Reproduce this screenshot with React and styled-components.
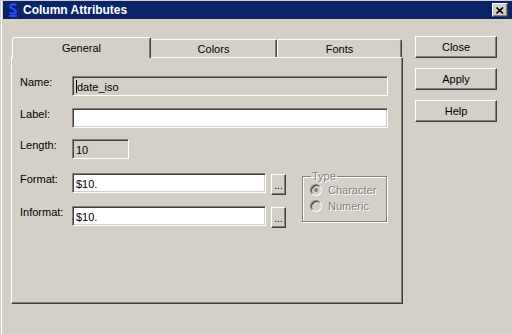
import React from "react";
import styled, { createGlobalStyle } from "styled-components";

const GlobalStyle = createGlobalStyle`
  html, body {
    margin: 0;
    padding: 0;
    background: #d4d0c8;
  }
  body {
    font-family: "Liberation Sans", Arial, sans-serif;
    font-size: 11px;
    color: #000;
  }
`;

const Window = styled.div`
  width: 512px;
  height: 334px;
  box-sizing: border-box;
  background: #d4d0c8;
  border-top: 1px solid #d4d0c8;
  padding-left: 3px;
  box-shadow: inset 1px 0 #d4d0c8, inset 2px 0 #fff;
  overflow: hidden;
`;

const TitleBar = styled.div`
  height: 18px;
  background: #0a246a;
  display: flex;
  align-items: center;
  padding: 0 4px 0 5px;
  color: #fff;
`;

const TitleText = styled.span`
  font-weight: bold;
  font-size: 12px;
  margin-left: 5px;
  flex: 1;
`;

const TitleClose = styled.div`
  width: 16px;
  height: 14px;
  box-sizing: border-box;
  background: #d4d0c8;
  border-top: 1px solid #fff;
  border-left: 1px solid #fff;
  border-right: 1px solid #404040;
  border-bottom: 1px solid #404040;
  box-shadow: inset -1px -1px #808080;
  display: flex;
  align-items: center;
  justify-content: center;
`;

const Body = styled.div`
  display: flex;
  padding: 18px 0 0 8px;
`;

const TabArea = styled.div`
  width: 392px;
  display: flex;
  flex-direction: column;
`;

const TabRow = styled.div`
  display: flex;
  height: 20px;
  padding-left: 1px;
  position: relative;
  z-index: 1;
`;

const Tab = styled.div`
  width: ${(p) => p.$w}px;
  box-sizing: border-box;
  height: ${(p) => (p.$active ? 21 : 18)}px;
  margin-top: ${(p) => (p.$active ? 0 : 2)}px;
  background: #d4d0c8;
  border-top: 1px solid #fff;
  border-left: ${(p) => (p.$noLeft ? "none" : "1px solid #fff")};
  border-right: 1px solid #404040;
  border-top-right-radius: 2px;
  border-top-left-radius: 2px;
  box-shadow: inset -1px 0 #808080;
  display: flex;
  align-items: center;
  justify-content: center;
  padding-top: ${(p) => (p.$active ? 0 : 1)}px;
`;

const Panel = styled.div`
  height: 247px;
  box-sizing: border-box;
  border-top: 1px solid #fff;
  border-left: 1px solid #fff;
  border-right: 1px solid #404040;
  border-bottom: 1px solid #404040;
  box-shadow: inset -1px -1px #808080;
  padding: 18px 0 0 8px;
`;

const Row = styled.div`
  display: flex;
  align-items: flex-start;
  margin-top: ${(p) => p.$top || 0}px;
`;

const Label = styled.div`
  width: 52px;
  line-height: 13px;
`;

const Field = styled.div`
  width: ${(p) => p.$w}px;
  height: 20px;
  box-sizing: border-box;
  background: ${(p) => (p.$readOnly ? "#d4d0c8" : "#fff")};
  border-top: 1px solid #808080;
  border-left: 1px solid #808080;
  border-right: 1px solid #fff;
  border-bottom: 1px solid #fff;
  box-shadow: inset 1px 1px #404040, inset -1px -1px #d4d0c8;
  padding: 3px 0 0 3px;
  line-height: 14px;
  white-space: nowrap;
  display: flex;
`;

const Caret = styled.span`
  display: inline-block;
  width: 0;
  height: 13px;
  border-left: 1px solid #000;
`;

const Lower = styled.div`
  display: flex;
  margin-top: 14px;
`;

const FormatCol = styled.div`
  display: flex;
  flex-direction: column;
`;

const Browse = styled.div`
  width: 15px;
  height: 21px;
  box-sizing: border-box;
  margin: 1px 0 0 5px;
  border-top: 1px solid #fff;
  border-left: 1px solid #fff;
  border-right: 1px solid #404040;
  border-bottom: 1px solid #404040;
  box-shadow: inset -1px -1px #808080;
  display: flex;
  justify-content: center;
  align-items: flex-end;
  padding-bottom: 3px;
  font-size: 10px;
  line-height: 10px;
`;

const Group = styled.fieldset`
  margin: -3px 0 0 16px;
  width: 85px;
  height: 52px;
  box-sizing: border-box;
  padding: 0 0 0 7px;
  border: 1px solid #808080;
  box-shadow: 1px 1px #fff, inset 1px 1px #fff;
`;

const Legend = styled.legend`
  padding: 0 1px;
  margin-left: 1px;
  line-height: 12px;
  color: #808080;
  text-shadow: 1px 1px #fff;
`;

const Radio = styled.div`
  display: flex;
  align-items: center;
  height: 16px;
  color: #808080;
  text-shadow: 1px 1px #fff;
`;

const RadioCircle = styled.span`
  width: 12px;
  height: 12px;
  box-sizing: border-box;
  border-radius: 50%;
  border: 1px solid;
  border-color: #808080 #fff #fff #808080;
  background: #d4d0c8;
  box-shadow: inset 1px 1px #404040;
  margin-right: 6px;
  display: flex;
  align-items: center;
  justify-content: center;
  &::after {
    content: "";
    width: 4px;
    height: 4px;
    border-radius: 50%;
    background: ${(p) => (p.$checked ? "#808080" : "transparent")};
  }
`;

const ButtonCol = styled.div`
  display: flex;
  flex-direction: column;
  gap: 10px;
  margin: -1px 0 0 12px;
`;

const Button = styled.div`
  width: 82px;
  height: 22px;
  box-sizing: border-box;
  border-top: 1px solid #fff;
  border-left: 1px solid #fff;
  border-right: 1px solid #404040;
  border-bottom: 1px solid #404040;
  box-shadow: inset -1px -1px #808080;
  display: flex;
  align-items: center;
  justify-content: center;
`;

function SasIcon() {
  return (
    <svg width="10" height="14" viewBox="0 0 10 14">
      <path
        d="M8 2.5 C7 0.8 2.2 1 2.2 3.5 C2.2 6 7.8 5.5 7.8 8.5 C7.8 11.2 2.8 11.2 1.8 9.5"
        fill="none"
        stroke="#2a4cff"
        strokeWidth="2.2"
      />
      <rect x="1" y="12" width="8" height="1.8" fill="#2a4cff" />
    </svg>
  );
}

function CloseGlyph() {
  return (
    <svg width="8" height="7" viewBox="0 0 8 7">
      <path d="M0.5 0.5 L7 6.5 M7 0.5 L0.5 6.5" stroke="#000" strokeWidth="1.6" />
    </svg>
  );
}

export default function App() {
  return (
    <>
      <GlobalStyle />
      <Window>
        <TitleBar>
          <SasIcon />
          <TitleText>Column Attributes</TitleText>
          <TitleClose>
            <CloseGlyph />
          </TitleClose>
        </TitleBar>
        <Body>
          <TabArea>
            <TabRow>
              <Tab $w={139} $active>General</Tab>
              <Tab $w={126} $noLeft>Colors</Tab>
              <Tab $w={125}>Fonts</Tab>
            </TabRow>
            <Panel>
              <Row>
                <Label>Name:</Label>
                <Field $w={316} $readOnly>
                  <Caret />
                  date_iso
                </Field>
              </Row>
              <Row $top={12}>
                <Label>Label:</Label>
                <Field $w={316} />
              </Row>
              <Row $top={11}>
                <Label>Length:</Label>
                <Field $w={57} $readOnly>10</Field>
              </Row>
              <Lower>
                <FormatCol>
                  <Row>
                    <Label>Format:</Label>
                    <Field $w={194}>$10.</Field>
                    <Browse>...</Browse>
                  </Row>
                  <Row $top={11}>
                    <Label>Informat:</Label>
                    <Field $w={194}>$10.</Field>
                    <Browse>...</Browse>
                  </Row>
                </FormatCol>
                <Group>
                  <Legend>Type</Legend>
                  <Radio>
                    <RadioCircle $checked />
                    Character
                  </Radio>
                  <Radio>
                    <RadioCircle />
                    Numeric
                  </Radio>
                </Group>
              </Lower>
            </Panel>
          </TabArea>
          <ButtonCol>
            <Button>Close</Button>
            <Button>Apply</Button>
            <Button>Help</Button>
          </ButtonCol>
        </Body>
      </Window>
    </>
  );
}
